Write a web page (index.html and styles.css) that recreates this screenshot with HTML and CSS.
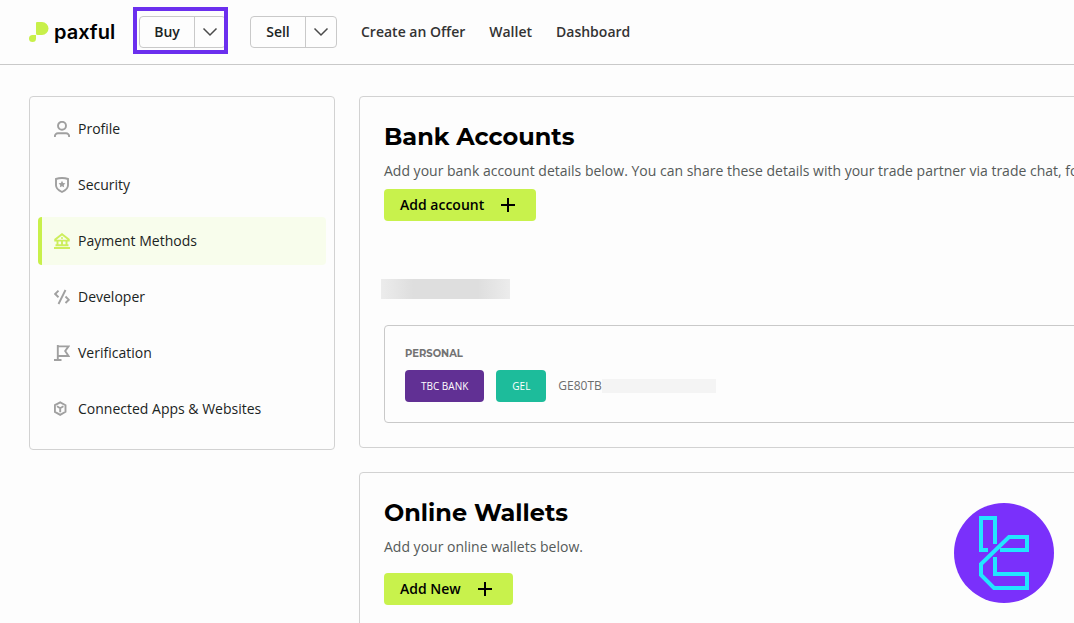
FILE: index.html
```
<!DOCTYPE html>
<html lang="en">
<head>
  <meta charset="UTF-8">
  <meta name="viewport" content="width=device-width, initial-scale=1.0">
  <title>Payment Methods | Paxful</title>
  <link rel="stylesheet" href="styles.css">
</head>
<body>
  <div class="page">
    <header class="topbar">
      <a class="logo" href="#">
        <svg width="20" height="20" viewBox="0 0 20 20" fill="#c8f04a" aria-hidden="true">
          <path d="M8 0h5a6.500 6.500 0 0 1 0 13H8.500A1.500 1.500 0 0 1 7 11.500V1a1 1 0 0 1 1-1z"/>
          <path d="M3.500 13H7v3.500a3.500 3.500 0 1 1-3.500-3.500z"/>
        </svg>
        <span>paxful</span>
      </a>

      <div class="split highlight">
        <button type="button" class="split-main">Buy</button>
        <button type="button" class="split-toggle" aria-label="Buy options">
          <svg width="16" height="10" viewBox="0 0 16 10"><path d="M1.500 1.500L8 8l6.500-6.500"/></svg>
        </button>
      </div>
      <div class="split">
        <button type="button" class="split-main">Sell</button>
        <button type="button" class="split-toggle" aria-label="Sell options">
          <svg width="16" height="10" viewBox="0 0 16 10"><path d="M1.500 1.500L8 8l6.500-6.500"/></svg>
        </button>
      </div>

      <nav class="nav">
        <a href="#">Create an Offer</a>
        <a href="#">Wallet</a>
        <a href="#">Dashboard</a>
      </nav>
    </header>

    <div class="layout">
      <aside class="sidebar">
        <a class="side-link" href="#">
          <svg width="16" height="16" viewBox="0 0 16 16"><circle cx="8" cy="4.800" r="4"/><path d="M.9 16v-.8a3 3 0 0 1 3-3h8.200a3 3 0 0 1 3 3v.8"/></svg>
          Profile
        </a>
        <a class="side-link" href="#">
          <svg width="16" height="16" viewBox="0 0 16 16"><path d="M8 1c2.200 0 4.200.3 6 1v6.200c0 3.200-2.200 5-6 6.800-3.800-1.800-6-3.600-6-6.800V2c1.800-.7 3.800-1 6-1z"/><path class="solid" d="M8 3.800l1.100 2.100 2.300.4-1.600 1.600.3 2.400L8 9.200l-2.100 1.100.3-2.400-1.600-1.600 2.300-.4z"/></svg>
          Security
        </a>
        <a class="side-link active" href="#">
          <svg width="16" height="16" viewBox="0 0 16 16"><path d="M0 15h16M1.500 12.300h13M3.500 8v4.500M8 8v4.500M12.500 8v4.500M1.200 7.600V6.500L8 1.200l6.800 5.300v1.100z"/><circle class="solid" cx="8" cy="5" r="1"/></svg>
          Payment Methods
        </a>
        <a class="side-link" href="#">
          <svg width="16" height="16" viewBox="0 0 16 16"><path d="M4.500 1.700L1.200 5l3.300 3.200M11.500 1L4.500 15M11.500 7.500l3.300 3.300-3.300 3.200"/></svg>
          Developer
        </a>
        <a class="side-link" href="#">
          <svg width="16" height="16" viewBox="0 0 16 16"><path d="M3.800 0v15M0 15h7.500M3.800 1.400h10.700L11.200 6l3.300 5H3.800"/></svg>
          Verification
        </a>
        <a class="side-link" href="#">
          <svg width="16" height="16" viewBox="0 0 16 16"><path d="M6.200 1.300L11.500 4.200v6.600l-5.300 3-5.300-3V4.200zM3 5.300l3.200 1.900 3.200-1.900M6.200 7.200v4"/></svg>
          Connected Apps &amp; Websites
        </a>
      </aside>

      <main class="content">
        <section class="card">
          <h2>Bank Accounts</h2>
          <p>Add your bank account details below. You can share these details with your trade partner via trade chat, for a faster trade.</p>
          <button type="button" class="add-btn">
            Add account
            <svg width="16" height="16" viewBox="0 0 16 16"><path d="M8 1v14M1 8h14"/></svg>
          </button>
          <div class="owner-hidden"></div>
          <div class="account">
            <h3>PERSONAL</h3>
            <div class="account-row">
              <span class="badge bank">TBC BANK</span>
              <span class="badge currency">GEL</span>
              <span class="iban">GE80TB<span class="iban-hidden"></span></span>
            </div>
          </div>
        </section>

        <section class="card wallets">
          <h2>Online Wallets</h2>
          <p>Add your online wallets below.</p>
          <button type="button" class="add-btn">
            Add New
            <svg width="16" height="16" viewBox="0 0 16 16"><path d="M8 1v14M1 8h14"/></svg>
          </button>
        </section>
      </main>
    </div>
  </div>

  <svg class="watermark" width="100" height="100" viewBox="0 0 100 100" aria-hidden="true">
    <circle cx="50" cy="50" r="50" fill="#7a30fb"/>
    <g fill="none" stroke="#22e6ff" stroke-width="4">
      <path d="M34 47H27V15H41V41"/>
      <path d="M46 47H73V34H55L27 61V72L40 85H73V71H41V54"/>
    </g>
  </svg>
</body>
</html>
```

FILE: styles.css
```
* {
  box-sizing: border-box;
}

html {
  scrollbar-width: none;
}

body {
  margin: 0;
  overflow-x: hidden;
  font-family: 'Open Sans', sans-serif;
  font-size: 14px;
  line-height: 20px;
  color: #1b2423;
  background: #fdfdfd;
}

a {
  color: inherit;
  text-decoration: none;
}

button {
  font: inherit;
  color: inherit;
  cursor: pointer;
}

svg {
  flex: none;
}

/* wider than small windows, the right side is cut off */
.page {
  min-width: 1280px;
}

.topbar {
  display: flex;
  align-items: center;
  height: 65px;
  padding: 0 29px;
  border-bottom: 1px solid #c9c9c9;
}

.logo {
  display: flex;
  align-items: center;
  gap: 5px;
  width: 110px;
  color: #000;
  font-family: Inter, sans-serif;
  font-size: 20px;
  font-weight: 600;
}

.split {
  position: relative;
  display: flex;
  height: 32px;
  margin-right: 24px;
  border: 1px solid #c9c9c9;
  border-radius: 4px;
}

.split button {
  display: flex;
  align-items: center;
  justify-content: center;
  padding: 0;
  border: none;
  background: none;
  font-weight: 600;
}

.split .split-main {
  width: 54px;
}

.split .split-toggle {
  width: 31px;
  border-left: 1px solid #c9c9c9;
}

.split-toggle path {
  fill: none;
  stroke: #4a4a4a;
  stroke-width: 1.5;
}

.highlight::after {
  content: "";
  position: absolute;
  inset: -10px -3px -7px -7px;
  border: 4px solid #6b2fee;
  pointer-events: none;
}

.nav {
  display: flex;
  gap: 24px;
  font-weight: 600;
  color: #333;
}

.layout {
  display: flex;
  align-items: flex-start;
  gap: 24px;
  padding: 31px 29px;
}

.sidebar {
  display: flex;
  flex-direction: column;
  gap: 8px;
  flex: none;
  width: 306px;
  padding: 8px 8px 16px;
  border: 1px solid #d2d2d2;
  border-radius: 4px;
}

.side-link {
  display: flex;
  align-items: center;
  gap: 8px;
  height: 48px;
  padding-left: 12px;
  border-left: 4px solid transparent;
  border-radius: 4px;
}

.side-link svg {
  fill: none;
  stroke: #a0a0a0;
  stroke-width: 1.9;
}

.side-link .solid {
  fill: #a0a0a0;
  stroke: none;
}

.side-link.active {
  border-left-color: #c8f04a;
  background: #f8fdec;
}

.side-link.active svg {
  stroke: #cdee5c;
}

.side-link.active .solid {
  fill: #cdee5c;
}

.content {
  display: flex;
  flex-direction: column;
  gap: 24px;
  flex: 1;
  min-width: 0;
}

.card {
  padding: 24px;
  border: 1px solid #d2d2d2;
  border-radius: 4px;
}

.card h2 {
  margin: 0 0 8px;
  font-family: Montserrat, Inter, sans-serif;
  font-size: 24px;
  line-height: 32px;
  font-weight: 700;
  color: #000;
}

.card p {
  margin: 0 0 8px;
  color: #555a59;
  white-space: nowrap;
}

.wallets p {
  margin-bottom: 16px;
}

.add-btn {
  display: flex;
  align-items: center;
  gap: 16px;
  height: 32px;
  padding: 0 20px 0 16px;
  border: none;
  border-radius: 4px;
  background: #c8f24c;
  color: #000;
  font-weight: 600;
}

.add-btn path {
  stroke: #000;
  stroke-width: 2;
}

.owner-hidden {
  width: 129px;
  height: 20px;
  margin: 58px 0 26px -3px;
  background: linear-gradient(90deg, #ececec, #dedede 25%, #dedede 75%, #ececec);
}

.account {
  padding: 20px;
  border: 1px solid #c9c9c9;
  border-radius: 4px;
}

.account h3 {
  margin: 0 0 8px;
  font-family: Montserrat, Inter, sans-serif;
  font-size: 10px;
  line-height: 16px;
  font-weight: 700;
  color: #737373;
}

.account-row {
  display: flex;
  align-items: center;
  gap: 12px;
}

.badge {
  height: 32px;
  padding: 0 16px;
  border-radius: 4px;
  font-size: 10px;
  line-height: 32px;
  font-weight: 400;
  color: #fff;
}

.bank {
  background: #613094;
}

.currency {
  background: #1dbc9b;
}

.iban {
  display: flex;
  align-items: center;
  font-size: 12px;
  color: #6d6d6d;
}

.iban-hidden {
  width: 114px;
  height: 14px;
  background: #f4f4f4;
}

.watermark {
  position: fixed;
  right: 20px;
  bottom: 20px;
}
```
